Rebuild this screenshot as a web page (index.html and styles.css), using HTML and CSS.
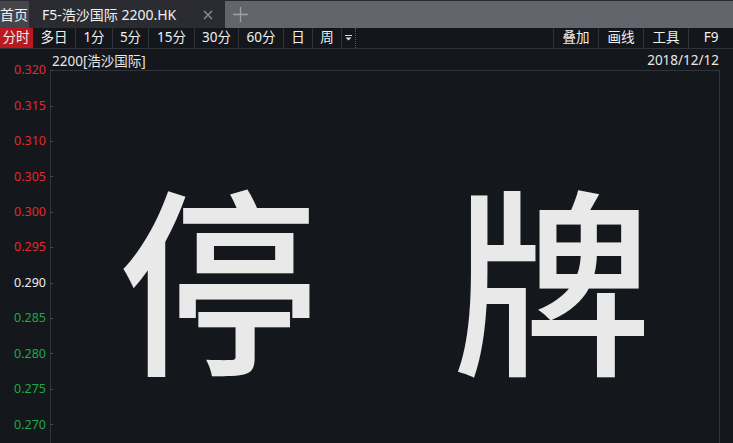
FILE: index.html
```html
<!DOCTYPE html>
<html lang="zh-CN">
<head>
<meta charset="utf-8">
<title>F5-浩沙国际 2200.HK</title>
<link rel="stylesheet" href="styles.css">
</head>
<body>
<div class="tabbar">
  <div class="tab tab-home">首页</div>
  <div class="tab tab-active"><span class="tab-title">F5-浩沙国际 2200.HK</span><svg class="tab-close" width="10" height="10" viewBox="0 0 10 10"><path d="M1 1L9 9M9 1L1 9" stroke="#8e8e94" stroke-width="1.4"/></svg></div>
  <div class="tab-add"><svg width="15" height="15" viewBox="0 0 15 15"><path d="M7.5 0V15M0 7.5H15" stroke="#a0a0a6" stroke-width="1.3"/></svg></div>
</div>
<div class="toolbar">
  <div class="tools-left">
    <span class="tool tool-on w33">分时</span>
    <span class="tool w43">多日</span>
    <span class="tool w37">1分</span>
    <span class="tool w36">5分</span>
    <span class="tool w46">15分</span>
    <span class="tool w44">30分</span>
    <span class="tool w45">60分</span>
    <span class="tool w29">日</span>
    <span class="tool w29">周</span>
    <span class="tool tool-more"><svg width="7" height="6" viewBox="0 0 7 6"><rect x="0" y="0" width="7" height="1" fill="#e0e0e0"/><path d="M0.5 2.5h6L3.5 5.5z" fill="#e0e0e0"/></svg></span>
  </div>
  <div class="tools-right">
    <span class="tool w45">叠加</span>
    <span class="tool w45">画线</span>
    <span class="tool w45">工具</span>
    <span class="tool w45">F9</span>
  </div>
</div>
<div class="header">
  <span class="stock">2200[浩沙国际]</span>
  <span class="date">2018/12/12</span>
</div>
<div class="main">
  <div class="axis">
    <div class="row up"><span class="lbl">0.320</span><i class="tick"></i></div>
    <div class="row up"><span class="lbl">0.315</span><i class="tick"></i></div>
    <div class="row up"><span class="lbl">0.310</span><i class="tick"></i></div>
    <div class="row up"><span class="lbl">0.305</span><i class="tick"></i></div>
    <div class="row up"><span class="lbl">0.300</span><i class="tick"></i></div>
    <div class="row up"><span class="lbl">0.295</span><i class="tick"></i></div>
    <div class="row flat"><span class="lbl">0.290</span><i class="tick"></i></div>
    <div class="row down"><span class="lbl">0.285</span><i class="tick"></i></div>
    <div class="row down"><span class="lbl">0.280</span><i class="tick"></i></div>
    <div class="row down"><span class="lbl">0.275</span><i class="tick"></i></div>
    <div class="row down"><span class="lbl">0.270</span><i class="tick"></i></div>
  </div>
  <div class="chart">
    <div class="halt"><span>停</span><span>牌</span></div>
  </div>
</div>
</body>
</html>
```
FILE: styles.css
```css
* { box-sizing: border-box; }
html, body { margin: 0; padding: 0; }
body {
  width: 733px;
  height: 443px;
  overflow: hidden;
  background: #14171c;
  color: #e6e6e6;
  font-family: "Noto Sans", "Noto Sans CJK SC", sans-serif;
  font-size: 12px;
}
.tabbar {
  height: 28px;
  background: #64646c;
  border-top: 1px solid #2a2b30;
  display: flex;
  align-items: stretch;
}
.tab {
  display: flex;
  align-items: center;
  font-size: 14px;
  color: #f0f0f0;
  line-height: 1;
}
.tab-home {
  width: 30px;
  background: #45464d;
  border-right: 1px solid #2a2b30;
  padding-left: 0;
}
.tab-active {
  width: 194px;
  background: #2b2c31;
  padding-left: 12px;
  justify-content: space-between;
  padding-right: 11px;
}
.tab-close { display: block; }
.tab-add {
  width: 32px;
  display: flex;
  align-items: center;
  justify-content: center;
  border-left: 1px solid #2a2b30;
}
.toolbar {
  height: 21px;
  border-bottom: 1px solid #30333a;
  display: flex;
  justify-content: space-between;
  background: #13161b;
}
.tools-left, .tools-right { display: flex; }
.tool {
  display: flex;
  align-items: center;
  justify-content: center;
  font-size: 13.5px;
  line-height: 1;
  color: #f0f0f0;
  border-right: 1px solid #30333a;
}
.tools-right .tool { border-right: none; border-left: 1px solid #30333a; }
.tool-on { background: #b8191e; border-right-color: #b8191e; }
.tool-more { width: 14px; border-right: 1px dotted #555861; }
.w29 { width: 29px; }
.w33 { width: 33px; }
.w36 { width: 36px; }
.w37 { width: 37px; }
.w43 { width: 43px; }
.w44 { width: 44px; }
.w45 { width: 45px; }
.w46 { width: 46px; }
.header {
  height: 21px;
  display: flex;
  justify-content: space-between;
  align-items: center;
  padding: 0 14px 0 52px;
  font-size: 13.5px;
  color: #e8e8e8;
}
.main {
  display: flex;
  height: 373px;
}
.axis {
  width: 53px;
  margin-right: -3px;
  margin-top: -17px;
  position: relative;
  z-index: 1;
  display: flex;
  flex-direction: column;
}
.row {
  height: 35.42px;
  flex: none;
  display: flex;
  align-items: center;
  gap: 4px;
}
.lbl { width: 46px; text-align: right; font-size: 12.5px; line-height: 1; }
.tick { width: 3px; height: 1px; background: #44474e; }
.up .lbl { color: #e8262b; }
.flat .lbl { color: #eeeeee; }
.down .lbl { color: #1fa848; }
.chart {
  width: 670px;
  border-left: 1px solid #30333a;
  border-top: 1px solid #30333a;
  border-right: 1px solid #30333a;
  padding-top: 102px;
}
.halt {
  display: flex;
  justify-content: center;
  gap: 134px;
  font-family: "Noto Sans CJK SC", sans-serif;
  font-size: 200px;
  line-height: 200px;
  font-weight: 500;
  color: #e9e9e9;
}
```
